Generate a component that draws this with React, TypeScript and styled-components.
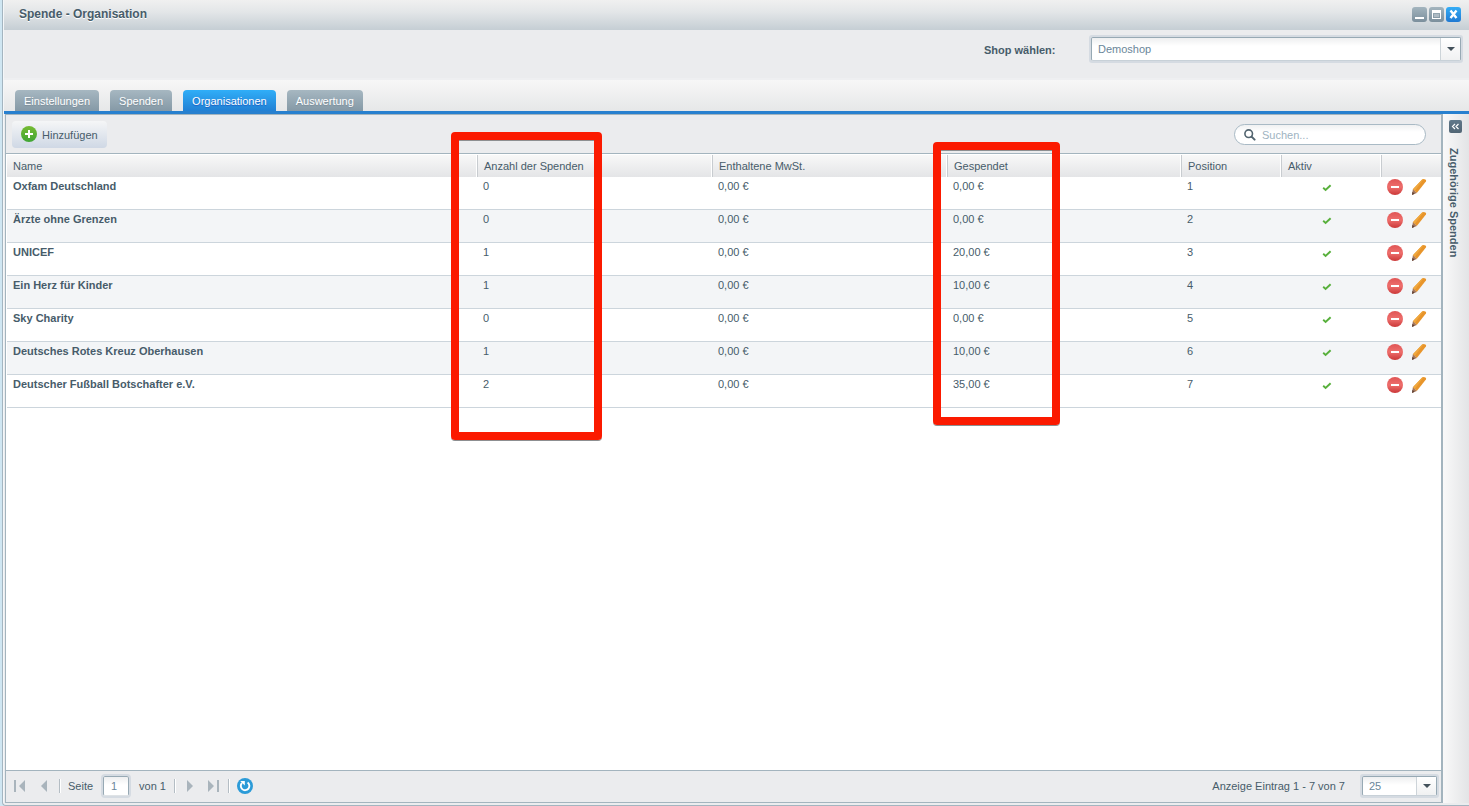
import React from 'react';
import styled, { createGlobalStyle } from 'styled-components';

const GlobalStyle = createGlobalStyle`
  * { box-sizing: border-box; }
  body {
    margin: 0;
    background: #cfe6f2;
    color: #475c6a;
    font: 11px/14px "Liberation Sans", Arial, sans-serif;
  }
  button, input, select { font: inherit; color: inherit; margin: 0; }
  button { cursor: pointer; }
`;

const Window = styled.div`
  display: flex;
  flex-direction: column;
  min-height: 100vh;
  margin-left: 2px;
  border-left: 1px solid #a4b5c0;
  border-bottom: 1px solid #a4b5c0;
  border-bottom-left-radius: 4px;
  box-shadow: inset 1px 0 0 #f4f7f9;
  padding-left: 1px;
  background: #ebecee;
`;

const TitleBar = styled.header`
  display: flex;
  justify-content: space-between;
  height: 30px;
  padding: 7px 8px 0 15px;
  background: linear-gradient(#f0f0f0, #e3e6e8 40%, #c5ced4);
`;

const Title = styled.h1`
  margin: 0;
  font-size: 12px;
  line-height: 14px;
  text-shadow: 0 1px 0 #fff;
`;

const WindowButtons = styled.div`
  display: flex;
  gap: 2px;
`;

const WindowButton = styled.button<{ $active?: boolean }>`
  display: block;
  width: 15px;
  height: 15px;
  padding: 0;
  border: 0;
  border-radius: 3px;
  background: ${p => (p.$active ? 'linear-gradient(#34adf6, #2079d2)' : 'linear-gradient(#a3b4be, #7b8f9c)')};
  svg { display: block; }
`;

const ShopBar = styled.div`
  display: flex;
  justify-content: flex-end;
  align-items: flex-start;
  height: 48px;
  padding: 5px 6px 0 0;
`;

const ShopLabel = styled.label`
  width: 105px;
  padding-top: 8px;
  font-weight: bold;
`;

const SelectFrame = styled.div<{ $width: string; $height: number }>`
  position: relative;
  width: ${p => p.$width};
  height: ${p => p.$height}px;
  border: 2px solid #d5dbe2;
  border-radius: 3px;
`;

const Select = styled.select`
  display: block;
  appearance: none;
  width: 100%;
  height: 100%;
  padding: 0 24px 0 6px;
  border: 1px solid #97a9b4;
  border-bottom-color: #c8d1d8;
  border-radius: 2px;
  outline: 0;
  background: linear-gradient(#eeeff0, #fff 8px);
  color: #6a8699;
`;

const SelectArrow = styled.span`
  position: absolute;
  top: 1px;
  right: 1px;
  bottom: 1px;
  display: flex;
  align-items: center;
  justify-content: center;
  width: 20px;
  border-left: 1px solid #cdd4d9;
  background: linear-gradient(#fff, #f0f1f2);
  pointer-events: none;
  &::after {
    content: "";
    border: 4px solid transparent;
    border-top-color: #43515b;
    border-bottom: 0;
  }
`;

const Tabs = styled.nav`
  display: flex;
  align-items: flex-end;
  gap: 11px;
  height: 36px;
  padding-left: 11px;
  border-top: 2px solid #eeeff1;
  border-bottom: 3px solid #2780cf;
  background: linear-gradient(#f7f7f7, #e6e7e8);
`;

const Tab = styled.button<{ $active?: boolean }>`
  height: 21px;
  padding: 1px 9px 0;
  border: 0;
  border-radius: 4px 4px 0 0;
  color: #fff;
  text-shadow: 0 1px 1px ${p => (p.$active ? '#1c5cc0' : '#7b8d99')};
  background: ${p => (p.$active ? 'linear-gradient(#30aef8, #2180d4)' : 'linear-gradient(#a6b7c1, #8599a6)')};
`;

const Body = styled.div`
  display: flex;
  flex: 1;
  padding-bottom: 2px;
`;

const Panel = styled.main`
  display: flex;
  flex-direction: column;
  flex: 1;
  min-width: 0;
  margin-left: 1px;
  border: 1px solid #a3b4be;
  border-right-width: 2px;
  background: #fff;
  padding-left: 1px;
`;

const Toolbar = styled.div`
  display: flex;
  justify-content: space-between;
  height: 39px;
  margin-left: -1px;
  padding: 6px 15px 0 6px;
  border-bottom: 1px solid #a3b4be;
  background: #ebecee;
`;

const AddButton = styled.button`
  display: flex;
  align-items: center;
  gap: 5px;
  height: 27px;
  padding: 0 9px;
  border: 0;
  border-radius: 4px;
  background: linear-gradient(#f5f6f7, #cfd8e5);
  svg { margin-bottom: 2px; }
`;

const Search = styled.label`
  display: flex;
  align-items: center;
  gap: 6px;
  width: 192px;
  height: 21px;
  margin-top: 3px;
  padding: 0 9px;
  border: 1px solid #a9bac5;
  border-radius: 11px;
  background: linear-gradient(#f0f1f2, #fff 7px);
`;

const SearchInput = styled.input`
  flex: 1;
  min-width: 0;
  padding: 0;
  border: 0;
  outline: 0;
  background: none;
  &::placeholder { color: #9eb3c1; opacity: 1; }
`;

const Table = styled.table`
  display: block;
  border-top: 1px solid #fff;
  tbody, thead { display: block; }
`;

const Row = styled.tr<{ $shaded?: boolean }>`
  display: grid;
  grid-template-columns: 1fr 235px 235px 234px 100px 100px 60px;
  height: 33px;
  border-bottom: 1px solid #ccd5dc;
  background: ${p => (p.$shaded ? '#f3f5f7' : '#fff')};
`;

const HeadRow = styled(Row)`
  height: 22px;
  border-bottom: 0;
  background: linear-gradient(#f8f8f8, #e4e5e7);
`;

const HeadCell = styled.th`
  position: relative;
  padding: 4px 6px 0;
  border-left: 1px solid #c8ccd0;
  box-shadow: -1px 0 0 #fff;
  font-weight: normal;
  text-align: left;
  &:first-child { border-left: 0; box-shadow: none; }
`;

const Cell = styled.td<{ $strong?: boolean }>`
  padding: 2px 6px 0;
  font-weight: ${p => (p.$strong ? 'bold' : 'normal')};
`;

const CheckCell = styled(Cell)`
  padding: 7px 0 0 41px;
  svg { display: block; }
`;

const ActionCell = styled(Cell)`
  display: flex;
  align-items: flex-start;
  gap: 8px;
`;

const IconButton = styled.button`
  display: block;
  padding: 0;
  border: 0;
  background: none;
  svg { display: block; }
`;

const Highlight = styled.span<{ $left: number; $top: number; $width: number; $height: number }>`
  position: absolute;
  z-index: 1;
  left: ${p => p.$left}px;
  top: ${p => p.$top}px;
  width: ${p => p.$width}px;
  height: ${p => p.$height}px;
  border: 8px solid #fb1a00;
  border-radius: 4px;
  box-shadow: inset 0 1px 0 #8d8f91, 0 1px 0 #8d8f91;
  pointer-events: none;
`;

const Footer = styled.footer`
  display: flex;
  align-items: center;
  height: 32px;
  margin: auto 0 0 -1px;
  padding: 0 2px 1px 5px;
  border-top: 1px solid #a3b4be;
  background: #ebecee;
`;

const Divider = styled.span`
  width: 2px;
  height: 14px;
  border-left: 1px solid #b4bdc4;
  border-right: 1px solid #fff;
`;

const PageLabel = styled.label`
  display: flex;
  align-items: center;
  gap: 10px;
  margin: 0 8px 0 7px;
`;

const PageInput = styled.input`
  width: 26px;
  height: 20px;
  padding: 0 7px;
  border: 1px solid #97a9b4;
  border-bottom-color: #dfe3e6;
  border-radius: 2px;
  outline: 2px solid #d5dbe2;
  background: linear-gradient(#eeeff0, #fff 8px);
  color: #6a8699;
`;

const RefreshButton = styled(IconButton)`
  margin-left: 7px;
`;

const Summary = styled.span`
  margin: 0 15px 0 auto;
`;

const SidePanel = styled.aside`
  display: flex;
  flex-direction: column;
  align-items: center;
  gap: 15px;
  width: 26px;
  padding: 6px 1px 0 0;
  background: linear-gradient(90deg, #f9f9f9, #e3e4e6);
`;

const SideButton = styled(IconButton)`
  width: 13px;
  height: 13px;
  border-radius: 2px;
  background: linear-gradient(#60788a, #526675);
`;

const SideTitle = styled.h2`
  margin: 0 3px 0 0;
  font-size: 11px;
  line-height: 14px;
  writing-mode: vertical-rl;
`;

const AddIcon = () => (
  <svg width="16" height="16" viewBox="0 0 16 16" aria-hidden="true">
    <defs>
      <linearGradient id="green" x2="0" y2="1">
        <stop stopColor="#76bb33" />
        <stop offset="1" stopColor="#3fa535" />
      </linearGradient>
    </defs>
    <circle cx="8" cy="8" r="8" fill="url(#green)" />
    <path d="M7 4h2v3h3v2H9v3H7V9H4V7h3z" fill="#fff" />
  </svg>
);

const SearchIcon = () => (
  <svg width="12" height="12" viewBox="0 0 12 12" fill="none" stroke="#52646f" aria-hidden="true">
    <circle cx="4.7" cy="4.7" r="3.8" strokeWidth="1.6" />
    <path d="m7.6 7.600 3 3" strokeWidth="2" strokeLinecap="round" />
  </svg>
);

const CheckIcon = () => (
  <svg width="10" height="8" viewBox="0 0 10 8" role="img" aria-label="Aktiv">
    <path d="M1.2 3.8 3.6 6 8.6 1.2" fill="none" stroke="#58b03c" strokeWidth="1.9" />
  </svg>
);

const DeleteIcon = () => (
  <svg width="16" height="16" viewBox="0 0 16 16" aria-hidden="true">
    <defs>
      <linearGradient id="red" x2="0" y2="1">
        <stop stopColor="#e05555" />
        <stop offset=".5" stopColor="#ee6f6d" />
        <stop offset="1" stopColor="#cb3838" />
      </linearGradient>
    </defs>
    <circle cx="8" cy="8" r="8" fill="url(#red)" />
    <path d="M4 7h8v2H4z" fill="#fff" />
  </svg>
);

const PencilIcon = () => (
  <svg width="16" height="16" viewBox="0 0 16 16" aria-hidden="true">
    <path d="M1.900 10.200 10.900.8Q11.700 0 12.600 0L14.400.6q1.200.7.500 2L5.800 13.900z" fill="#e8952b" />
    <path d="M1.900 10.200 10.900.8Q11.700 0 12.600 0L3.700 11.900z" fill="#efa83f" />
    <path d="m1.900 10.200 3.900 3.700L1 16z" fill="#a4765a" />
    <path d="m1.400 12.800 2.200 2L1 16z" fill="#5f4238" />
  </svg>
);

const RefreshIcon = () => (
  <svg width="16" height="16" viewBox="0 0 16 16" aria-hidden="true">
    <circle cx="8" cy="8" r="8" fill="#2b9bd8" />
    <path d="M10.6 4.4A4.3 4.3 0 1 1 5 4.9" fill="none" stroke="#fff" strokeWidth="1.9" />
    <path d="M3.2 3h4.6v4.6z" fill="#fff" />
  </svg>
);

const pageShapes = {
  first: { width: 24, d: 'M14 2v12L8 8zM3 2h2v12H3z' },
  previous: { width: 24, d: 'M12 2v12L6 8z' },
  next: { width: 26, d: 'M11 2v12l6-6z' },
  last: { width: 26, d: 'M6 2v12l6-6zM15 2h2v12h-2z' },
};

const PageButton = ({ kind, label }: { kind: keyof typeof pageShapes; label: string }) => (
  <IconButton aria-label={label}>
    <svg width={pageShapes[kind].width} height="16" fill="#a9b4bc" aria-hidden="true">
      <path d={pageShapes[kind].d} />
    </svg>
  </IconButton>
);

const organisations = [
  ['Oxfam Deutschland', '0', '0,00 €', '0,00 €'],
  ['Ärzte ohne Grenzen', '0', '0,00 €', '0,00 €'],
  ['UNICEF', '1', '0,00 €', '20,00 €'],
  ['Ein Herz für Kinder', '1', '0,00 €', '10,00 €'],
  ['Sky Charity', '0', '0,00 €', '0,00 €'],
  ['Deutsches Rotes Kreuz Oberhausen', '1', '0,00 €', '10,00 €'],
  ['Deutscher Fußball Botschafter e.V.', '2', '0,00 €', '35,00 €'],
];

const tabs = ['Einstellungen', 'Spenden', 'Organisationen', 'Auswertung'];

export default function App() {
  return (
    <>
      <GlobalStyle />
      <Window>
        <TitleBar>
          <Title>Spende - Organisation</Title>
          <WindowButtons>
            <WindowButton aria-label="Minimieren">
              <svg width="15" height="15"><path d="M3 10h9v2H3z" fill="#fff" /></svg>
            </WindowButton>
            <WindowButton aria-label="Maximieren">
              <svg width="15" height="15">
                <path d="M3 3h9v9H3zM4 6v5h7V6z" fill="#fff" fillRule="evenodd" />
                <path d="M5 7h5v3H5z" fill="#aebbc4" />
              </svg>
            </WindowButton>
            <WindowButton $active aria-label="Schließen">
              <svg width="15" height="15"><path d="m4.500 3.500 6 7.500m0-7.500-6 7.500" stroke="#fff" strokeWidth="2.400" /></svg>
            </WindowButton>
          </WindowButtons>
        </TitleBar>
        <ShopBar>
          <ShopLabel htmlFor="shop">Shop wählen:</ShopLabel>
          <SelectFrame $width="374px" $height={28}>
            <Select id="shop"><option>Demoshop</option></Select>
            <SelectArrow />
          </SelectFrame>
        </ShopBar>
        <Tabs>
          {tabs.map(name => (
            <Tab key={name} $active={name === 'Organisationen'}>{name}</Tab>
          ))}
        </Tabs>
        <Body>
          <Panel>
            <Toolbar>
              <AddButton><AddIcon />Hinzufügen</AddButton>
              <Search>
                <SearchIcon />
                <SearchInput type="text" placeholder="Suchen..." aria-label="Suchen" />
              </Search>
            </Toolbar>
            <Table>
              <thead>
                <HeadRow>
                  <HeadCell>Name</HeadCell>
                  <HeadCell>
                    Anzahl der Spenden
                    <Highlight $left={-27} $top={-23} $width={151} $height={308} />
                  </HeadCell>
                  <HeadCell>Enthaltene MwSt.</HeadCell>
                  <HeadCell>
                    Gespendet
                    <Highlight $left={-15} $top={-13} $width={127} $height={283} />
                  </HeadCell>
                  <HeadCell>Position</HeadCell>
                  <HeadCell>Aktiv</HeadCell>
                  <HeadCell aria-label="Aktionen" />
                </HeadRow>
              </thead>
              <tbody>
                {organisations.map(([name, count, tax, donated], i) => (
                  <Row key={name} $shaded={i % 2 === 1}>
                    <Cell $strong>{name}</Cell>
                    <Cell>{count}</Cell>
                    <Cell>{tax}</Cell>
                    <Cell>{donated}</Cell>
                    <Cell>{i + 1}</Cell>
                    <CheckCell><CheckIcon /></CheckCell>
                    <ActionCell>
                      <IconButton aria-label="Löschen"><DeleteIcon /></IconButton>
                      <IconButton aria-label="Bearbeiten"><PencilIcon /></IconButton>
                    </ActionCell>
                  </Row>
                ))}
              </tbody>
            </Table>
            <Footer>
              <PageButton kind="first" label="Erste Seite" />
              <PageButton kind="previous" label="Vorherige Seite" />
              <Divider />
              <PageLabel>
                Seite
                <PageInput type="text" defaultValue="1" />
                von 1
              </PageLabel>
              <Divider />
              <PageButton kind="next" label="Nächste Seite" />
              <PageButton kind="last" label="Letzte Seite" />
              <Divider />
              <RefreshButton aria-label="Aktualisieren"><RefreshIcon /></RefreshButton>
              <Summary>Anzeige Eintrag 1 - 7 von 7</Summary>
              <SelectFrame $width="79px" $height={24}>
                <Select aria-label="Einträge pro Seite"><option>25</option></Select>
                <SelectArrow />
              </SelectFrame>
            </Footer>
          </Panel>
          <SidePanel>
            <SideButton aria-label="Ausklappen">
              <svg width="13" height="13" fill="none" stroke="#fff" strokeWidth="1.200">
                <path d="M6 4 3.500 6.500 6 9M9.500 4 7 6.500 9.500 9" />
              </svg>
            </SideButton>
            <SideTitle>Zugehörige Spenden</SideTitle>
          </SidePanel>
        </Body>
      </Window>
    </>
  );
}
